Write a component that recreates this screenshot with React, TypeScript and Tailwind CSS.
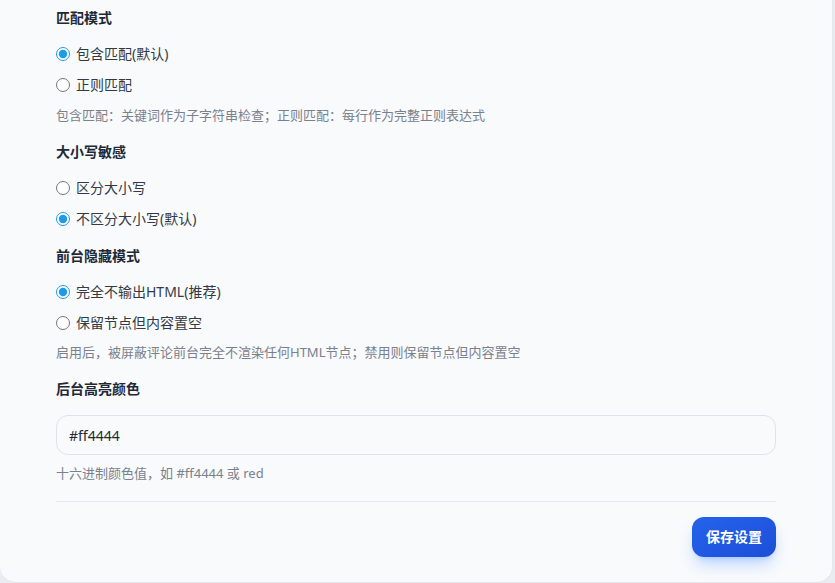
import { useState } from "react";

type Option = { value: string; label: string };

function RadioGroup({
  name,
  options,
  value,
  onChange,
}: {
  name: string;
  options: Option[];
  value: string;
  onChange: (v: string) => void;
}) {
  return (
    <div className="flex flex-col gap-[11px]">
      {options.map((opt) => (
        <label key={opt.value} className="flex h-5 items-center gap-[6px] text-sm text-[#333a45]">
          <input
            type="radio"
            name={name}
            checked={value === opt.value}
            onChange={() => onChange(opt.value)}
            className="m-0 h-[14px] w-[14px] accent-[#1e9be6]"
          />
          <span>{opt.label}</span>
        </label>
      ))}
    </div>
  );
}

function Section({ title, children }: { title: string; children: React.ReactNode }) {
  return (
    <div>
      <h3 className="mb-4 text-sm font-bold leading-5 text-[#1f2937]">{title}</h3>
      {children}
    </div>
  );
}

export default function App() {
  const [match, setMatch] = useState("contains");
  const [caseMode, setCaseMode] = useState("insensitive");
  const [hide, setHide] = useState("none");
  const [color, setColor] = useState("#ff4444");

  return (
    <div
      className="h-screen overflow-hidden bg-[#e9ecf0]"
      style={{ fontFamily: '"Noto Sans", "Noto Sans CJK SC", sans-serif' }}
    >
      <div className="w-[833px] rounded-b-2xl border-r border-b border-[#e3e6ea] bg-[#f8fafc] px-14 pt-2 pb-[25px]">
        <div className="flex flex-col gap-[17px]">
          {/* 匹配模式 */}
          <Section title="匹配模式">
            <RadioGroup
              name="match"
              value={match}
              onChange={setMatch}
              options={[
                { value: "contains", label: "包含匹配(默认)" },
                { value: "regex", label: "正则匹配" },
              ]}
            />
            <p className="mt-[10px] text-[13px] leading-5 text-[#7a818c]">
              包含匹配：关键词作为子字符串检查；正则匹配：每行作为完整正则表达式
            </p>
          </Section>

          {/* 大小写敏感 */}
          <Section title="大小写敏感">
            <RadioGroup
              name="case"
              value={caseMode}
              onChange={setCaseMode}
              options={[
                { value: "sensitive", label: "区分大小写" },
                { value: "insensitive", label: "不区分大小写(默认)" },
              ]}
            />
          </Section>

          {/* 前台隐藏模式 */}
          <Section title="前台隐藏模式">
            <RadioGroup
              name="hide"
              value={hide}
              onChange={setHide}
              options={[
                { value: "none", label: "完全不输出HTML(推荐)" },
                { value: "empty", label: "保留节点但内容置空" },
              ]}
            />
            <p className="mt-[9px] text-[13px] leading-5 text-[#7a818c]">
              启用后，被屏蔽评论前台完全不渲染任何HTML节点；禁用则保留节点但内容置空
            </p>
          </Section>

          {/* 后台高亮颜色 */}
          <Section title="后台高亮颜色">
            <input
              type="text"
              value={color}
              onChange={(e) => setColor(e.target.value)}
              className="h-10 w-full rounded-xl border border-[#dfe2e6] bg-[#f9fafb] px-3 text-sm text-[#1f2937] outline-none"
            />
            <p className="mt-2 text-[13px] leading-5 text-[#7a818c]">十六进制颜色值，如 #ff4444 或 red</p>
          </Section>
        </div>

        <div className="mt-[18px] border-t border-[#e5e7eb] pt-[15px]">
          <div className="flex justify-end">
            <button className="h-10 rounded-xl bg-gradient-to-br from-[#2563eb] to-[#1d4ed8] px-[14px] text-sm font-semibold text-white shadow-lg shadow-blue-500/30">
              保存设置
            </button>
          </div>
        </div>
      </div>
    </div>
  );
}
